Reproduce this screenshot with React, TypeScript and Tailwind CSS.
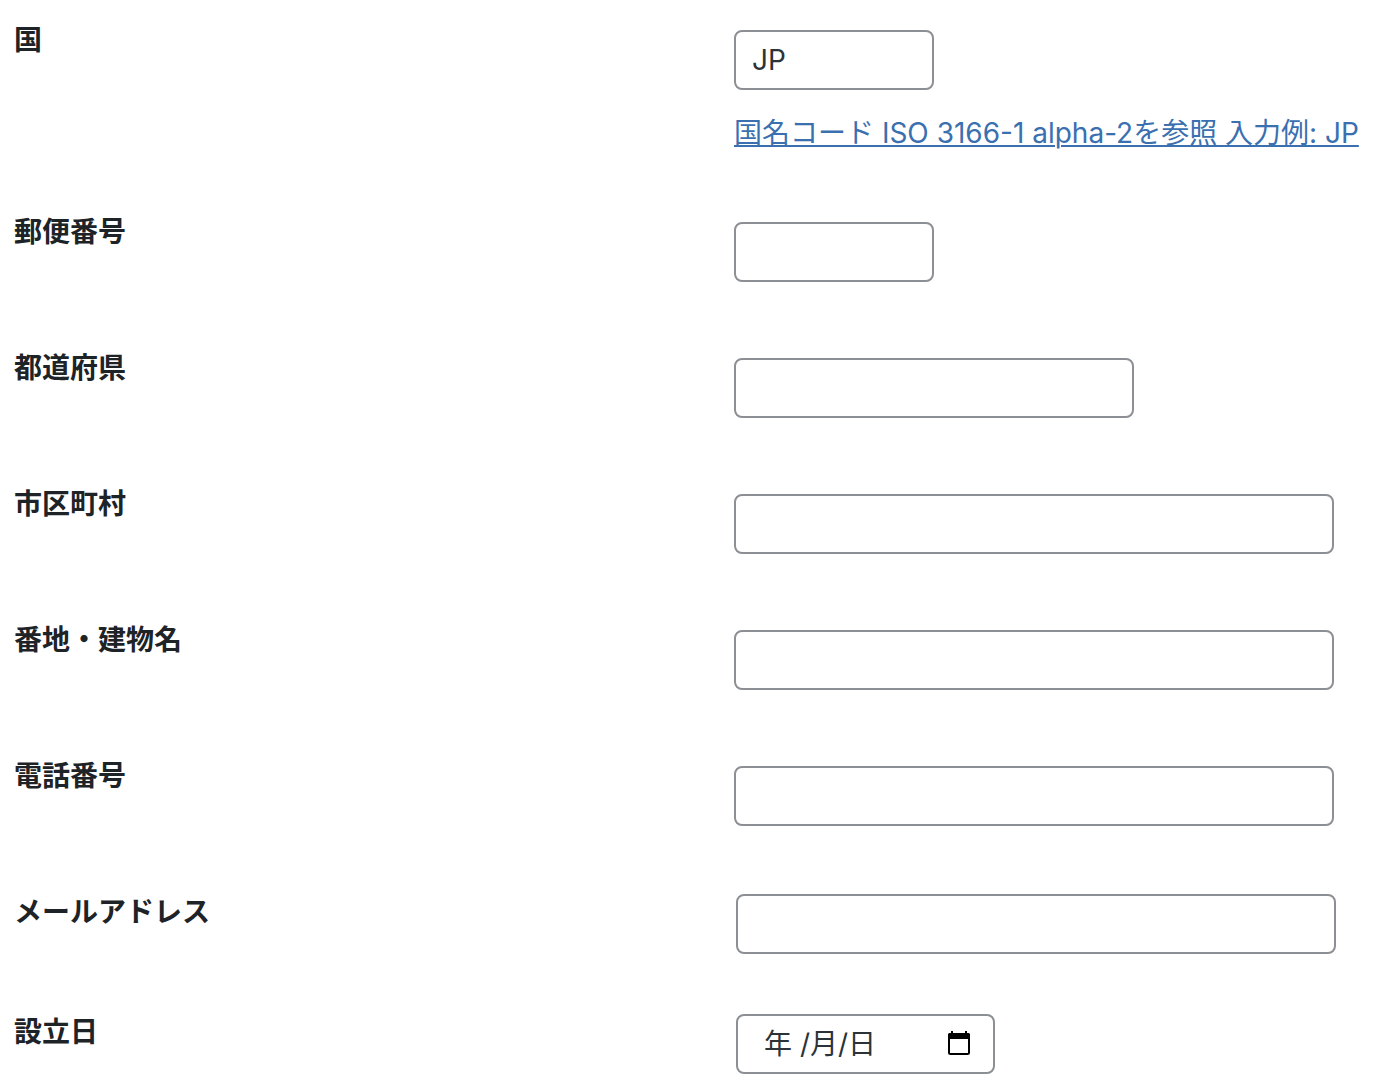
import React, { useState } from "react";

type Field = {
  id: string;
  label: string;
  type: string;
  width: string;
  value?: string;
};

const addressFields: Field[] = [
  { id: "country", label: "国", type: "text", width: "w-[200px]", value: "JP" },
  { id: "postal-code", label: "郵便番号", type: "text", width: "w-[200px]" },
  { id: "region", label: "都道府県", type: "text", width: "w-[400px]" },
  { id: "locality", label: "市区町村", type: "text", width: "w-[600px]" },
  { id: "street", label: "番地・建物名", type: "text", width: "w-[600px]" },
  { id: "telephone", label: "電話番号", type: "tel", width: "w-[600px]" },
];

const inputBase =
  "block h-[60px] max-w-full rounded-lg border-2 border-[#8c8f94] bg-white px-4 text-[28px] text-[#2c3338] outline-none focus:border-[#2271b1]";

const FieldLabel = ({ id, children }: { id: string; children: string }) => (
  <label
    htmlFor={id}
    className="min-w-0 flex-1 pt-5 text-[28px] leading-10 font-bold text-[#1d2327]"
  >
    {children}
  </label>
);

const CalendarIcon = () => (
  <svg width="24" height="26" viewBox="0 0 24 26" fill="none" aria-hidden="true">
    <path d="M5 0v4M19 0v4" stroke="#000" strokeWidth="2" />
    <rect x="2" y="3" width="20" height="20" rx="1.5" stroke="#000" strokeWidth="2" />
    <path d="M1 4a2 2 0 0 1 2-2h18a2 2 0 0 1 2 2v4H1z" fill="#000" />
  </svg>
);

const App = () => {
  const [foundingDate, setFoundingDate] = useState("");

  return (
    <form className="bg-white pl-[14px] font-['Inter','Noto_Sans_CJK_JP',sans-serif]">
      {/* 住所・電話番号 */}
      {addressFields.map((field) => (
        <div key={field.id} className="flex">
          <FieldLabel id={field.id}>{field.label}</FieldLabel>
          <div className="w-[646px] pt-[30px] pb-[46px]">
            <input
              id={field.id}
              type={field.type}
              defaultValue={field.value}
              className={`${inputBase} ${field.width}`}
            />
            {field.id === "country" && (
              <a
                href="#iso-3166"
                className="mt-[30px] block w-fit text-[28px] leading-[26px] whitespace-nowrap text-[#3a6fb0] underline decoration-2 underline-offset-2"
              >
                国名コード ISO 3166-1 alpha-2を参照 入力例: JP
              </a>
            )}
          </div>
        </div>
      ))}

      {/* メールアドレス */}
      <div className="flex">
        <FieldLabel id="email">メールアドレス</FieldLabel>
        <div className="w-[646px] px-0.5 pt-[22px] pb-[38px]">
          <input id="email" type="email" className={`${inputBase} w-[600px]`} />
        </div>
      </div>

      {/* 設立日 */}
      <div className="flex">
        <FieldLabel id="founding-date">設立日</FieldLabel>
        <div className="w-[646px] px-0.5 pt-[22px] pb-4">
          <div className="flex h-[60px] w-[259px] items-center justify-between rounded-lg border-2 border-[#8c8f94] bg-white pr-[22px] pl-[26px]">
            <input
              id="founding-date"
              type="text"
              placeholder="年 /月/日"
              value={foundingDate}
              onChange={(e) => setFoundingDate(e.target.value)}
              className="w-[160px] text-[28px] text-[#2c3338] outline-none placeholder:text-[#2c3338]"
            />
            <button type="button" aria-label="カレンダーを開く">
              <CalendarIcon />
            </button>
          </div>
        </div>
      </div>
    </form>
  );
};

export default App;
